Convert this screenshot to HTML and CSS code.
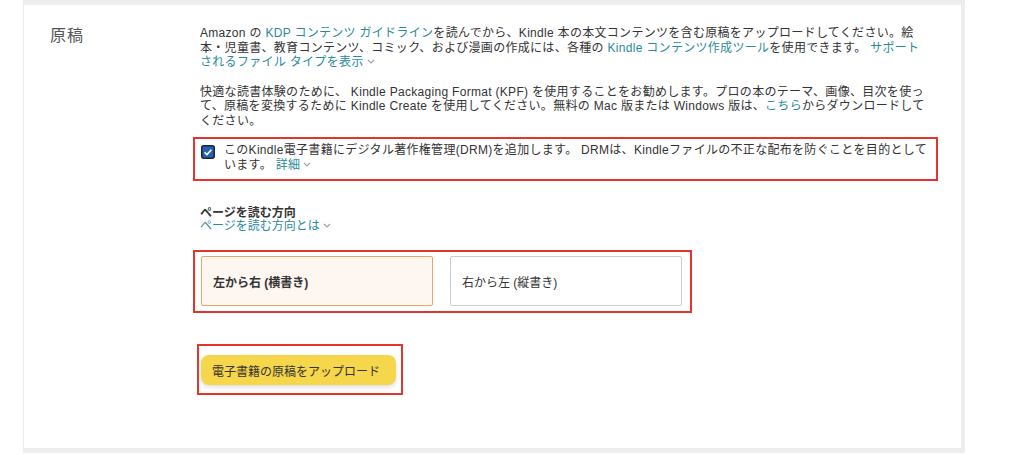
FILE: index.html
```html
<!DOCTYPE html>
<html lang="ja">
<head>
<meta charset="utf-8">
<title>原稿</title>
<link rel="stylesheet" href="styles.css">
</head>
<body>
<section class="panel">
  <h2 class="heading">原稿</h2>
  <div class="content">
    <p class="para">Amazon の <a class="link">KDP コンテンツ ガイドライン</a>を読んでから、Kindle 本の本文コンテンツを含む原稿をアップロードしてください。絵<br>本・児童書、教育コンテンツ、コミック、および漫画の作成には、各種の <a class="link">Kindle コンテンツ作成ツール</a>を使用できます。 <a class="link">サポート<br>されるファイル タイプを表示</a><svg class="caret" viewBox="0 0 8 5" width="8" height="5"><path d="M1 1l3 3 3-3" fill="none" stroke="#9aa0a6" stroke-width="1.1"/></svg></p>
    <p class="para">快適な読書体験のために、 Kindle Packaging Format (KPF) を使用することをお勧めします。プロの本のテーマ、画像、目次を使っ<br>て、原稿を変換するために Kindle Create を使用してください。無料の Mac 版または Windows 版は、<a class="link">こちら</a>からダウンロードして<br>ください。</p>
    <div class="hl hl-drm">
      <label class="drm">
        <svg class="check" viewBox="0 0 14 14" width="14" height="14"><rect x="0.75" y="0.75" width="12.5" height="12.5" rx="2" fill="#2563b0" stroke="#1c2331" stroke-width="1.5"/><path d="M3.6 7.2l2.3 2.3 4.5-4.8" fill="none" stroke="#fff" stroke-width="1.6"/></svg>
        <span class="drm-text">このKindle電子書籍にデジタル著作権管理(DRM)を追加します。 DRMは、Kindleファイルの不正な配布を防ぐことを目的として<br>います。 <a class="link">詳細</a><svg class="caret" viewBox="0 0 8 5" width="8" height="5"><path d="M1 1l3 3 3-3" fill="none" stroke="#9aa0a6" stroke-width="1.1"/></svg></span>
      </label>
    </div>
    <div class="dir-title">ページを読む方向</div>
    <div class="dir-link"><a class="link">ページを読む方向とは</a><svg class="caret" viewBox="0 0 8 5" width="8" height="5"><path d="M1 1l3 3 3-3" fill="none" stroke="#9aa0a6" stroke-width="1.1"/></svg></div>
    <div class="hl hl-dir">
      <div class="opt opt-on">左から右 (横書き)</div>
      <div class="opt">右から左 (縦書き)</div>
    </div>
    <div class="hl hl-up">
      <button class="upload">電子書籍の原稿をアップロード</button>
    </div>
  </div>
</section>
</body>
</html>
```
FILE: styles.css
```css
html, body {
  margin: 0;
  padding: 0;
  background: #ffffff;
}
body {
  font-family: "Liberation Sans", "Noto Sans CJK JP", sans-serif;
  font-size: 12px;
  color: #333333;
}
.panel {
  box-sizing: border-box;
  margin-left: 23px;
  width: 942px;
  height: 453px;
  background: #ffffff;
  border-style: solid;
  border-color: #ededed;
  border-width: 5px 4px 5px 1px;
  padding: 21px 31px 0 26px;
  display: grid;
  grid-template-columns: 150px 730px;
  align-items: start;
}
.heading {
  margin: 0;
  font-size: 16px;
  line-height: 20px;
  font-weight: normal;
  color: #555555;
  letter-spacing: 1px;
}
.content {
  display: flex;
  flex-direction: column;
  align-items: flex-start;
}
.para {
  margin: 0 0 15px 0;
  line-height: 14.5px;
  white-space: nowrap;
  letter-spacing: 0.3px;
}
.para + .para {
  margin-bottom: 9px;
}
.link {
  color: #2a8a9c;
  text-decoration: none;
}
.caret {
  margin-left: 3px;
  vertical-align: 2px;
}
.hl {
  box-sizing: border-box;
  border: 2px solid #e5342c;
}
.hl-drm {
  align-self: stretch;
  margin: 0 -8px 0 -7px;
  padding: 4px 6px 6px 6px;
}
.drm {
  display: flex;
  align-items: flex-start;
  gap: 9px;
}
.check {
  flex: none;
  margin-top: 2px;
}
.drm-text {
  line-height: 15px;
  white-space: nowrap;
  letter-spacing: 0.3px;
}
.dir-title {
  margin-top: 26px;
  font-weight: bold;
  line-height: 12px;
}
.dir-link {
  line-height: 14px;
}
.hl-dir {
  margin: 17px 0 0 -7px;
  padding: 4px 8px 5px 6px;
  display: flex;
  gap: 17px;
}
.opt {
  box-sizing: border-box;
  width: 232px;
  height: 50px;
  border: 1px solid #c8cbd0;
  border-radius: 2px;
  background: #ffffff;
  display: flex;
  align-items: center;
  padding-left: 11px;
  color: #333333;
}
.opt-on {
  background: #fdf6f1;
  border-color: #e8a765;
  font-weight: bold;
}
.hl-up {
  margin: 31px 0 0 -3px;
  padding: 9px 5px 8px 2px;
}
.upload {
  display: block;
  box-sizing: border-box;
  width: 195px;
  height: 30px;
  border: none;
  border-radius: 8px;
  background: #f6d64a;
  box-shadow: 0 2px 5px rgba(180, 180, 180, 0.45);
  font-family: inherit;
  font-size: 12px;
  color: #333333;
  text-align: left;
  padding: 0 0 0 11px;
}
```
